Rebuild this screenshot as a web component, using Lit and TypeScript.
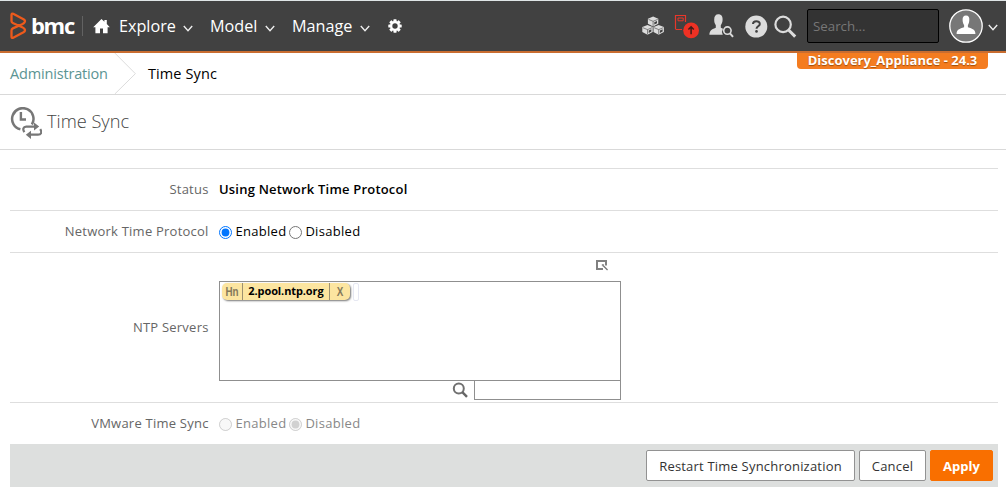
import { LitElement, html, css, svg } from "lit";
import { customElement } from "lit/decorators.js";

const chevron = html`<svg class="chev" width="10" height="7" viewBox="0 0 10 7"><path d="M.8 1 5 5.6 9.2 1" fill="none" stroke="#eee" stroke-width="1.4"/></svg>`;

const cube = (x: number, y: number) => svg`<g transform="translate(${x} ${y})">
  <path d="M5.2 0 10.4 2.1V7.2L5.2 9.8 0 7.2V2.1Z" fill="#dcdcdc"/>
  <path d="M.6 2.8 5.2 4.7 9.8 2.8M5.2 4.7V9.4" fill="none" stroke="#414141" stroke-width=".6"/>
  <path d="M6.4 5.6 9.1 4.4V6.6L6.4 8Z" fill="#414141"/></g>`;

@customElement("app-header")
export class AppHeader extends LitElement {
  static styles = css`
    :host { display: block; height: 53px; box-sizing: border-box; background: #414141; border-top: 1px solid #dfe5e6; border-bottom: 2px solid #c96d30; color: #fff; }
    .bar { display: flex; align-items: center; height: 50px; padding-left: 10px; }
    svg { display: block; flex: none; }
    .brand { display: flex; align-items: center; width: 72px; }
    .word { font: bold 22px/28px "Open Sans", sans-serif; letter-spacing: -1.3px; margin: 0 0 2px 3px; }
    .divider { width: 1px; height: 20px; background: #626262; margin-right: 10px; }
    .home { margin-right: 9px; }
    .menu { display: flex; align-items: center; height: 24px; font-size: 16.2px; line-height: 24px; white-space: nowrap; }
    .explore { width: 91px; }
    .model { width: 82px; }
    .manage { width: 96px; }
    .label { flex: 1; }
    .chev { margin-top: 4px; margin-right: 17px; }
    .manage .chev { margin-right: 18px; }
    .tools { display: flex; align-items: center; margin-left: auto; padding-right: 8px; }
    .search { box-sizing: border-box; width: 132px; height: 34px; margin: 0 10px; padding: 0 5px; border: 1px solid #000; border-radius: 2px; background: #333; color: #aaa; font: 13.3px "Open Sans", sans-serif; outline: none; }
    .search::placeholder { color: #777; opacity: 1; }
    .tools .chev { margin: 3px 0 0 5px; }
    .c1 { margin-right: 10px; } .c2 { margin-right: 10px; } .c3 { margin-right: 11px; } .c4 { margin-right: 6px; }
  `;
  render() {
    return html`<header class="bar">
      <div class="brand">
        <svg width="18" height="28" viewBox="0 0 18 28"><path d="M1.5 3Q1.5 1 3.2 1.8L13.5 7.2Q15.9 8.6 14.5 10.4 13.8 11.6 12.2 12.3L2.8 16.4Q1.5 17 1.5 18.4V24.4Q1.5 26.6 3.2 25.7L13.5 20.2Q15.9 18.8 14.5 17 13.8 15.9 12.2 15.2L2.8 11Q1.5 10.4 1.5 9Z" fill="none" stroke="#ed5a1c" stroke-width="2.3" stroke-linejoin="round"/></svg>
        <span class="word">bmc</span>
      </div>
      <span class="divider"></span>
      <svg class="home" width="17" height="15" viewBox="0 0 17 15"><path d="M8.5 0 11.4 2.8V1H13.8V5.1L16.8 8.2H14.6V14.2H10V9.6H7V14.2H2.4V8.2H.2Z" fill="#fff"/></svg>
      <div class="menu explore"><span class="label">Explore</span>${chevron}</div>
      <div class="menu model"><span class="label">Model</span>${chevron}</div>
      <div class="menu manage"><span class="label">Manage</span>${chevron}</div>
      <svg width="14" height="14" viewBox="-7 -7 14 14"><g fill="#fff">${[0, 45, 90, 135].map((a) => svg`<rect x="-1.6" y="-6.7" width="3.2" height="13.4" rx=".6" transform="rotate(${a})"/>`)}<circle r="5"/></g><circle r="2.7" fill="#414141"/></svg>
      <div class="tools">
        <svg class="c1" width="23" height="20" viewBox="0 0 23 20">${cube(6.9, 0.6)}${cube(1.3, 8.9)}${cube(12.5, 8.9)}</svg>
        <svg class="c2" width="25" height="25" viewBox="0 0 25 25"><path d="M1.5 15V1.5H11.5V8M1.5 15.5H8" fill="none" stroke="#e8372a" stroke-width="1.2"/><path d="M4 4H9.2V6.8H4Z" fill="none" stroke="#e8372a"/><circle cx="17.1" cy="16.4" r="7.9" fill="#ee3124"/><path d="M17.1 20.2V13.2M14.4 15.5 17.1 12.8 19.8 15.5" fill="none" stroke="#401b18" stroke-width="1.5"/></svg>
        <svg class="c3" width="25" height="24" viewBox="0 0 25 24"><path d="M9.3.3C12.3.3 13.8 2.4 13.6 5.8 13.5 8.7 12.6 10 11.8 11.3V13.7L14 14.8A5.8 5.8 0 0 0 13.8 20.8H.4C.5 17 2 15.5 6.8 13.7V11.3C5.8 9.8 5.2 8.4 5.2 5.8 5.2 2.2 6.7.3 9.3.3Z" fill="#dcdcdc"/><circle cx="18.4" cy="16.6" r="3.7" fill="none" stroke="#dcdcdc" stroke-width="1.6"/><path d="m21 19.4 3 3.4" stroke="#dcdcdc" stroke-width="2"/></svg>
        <svg class="c4" width="23" height="24" viewBox="0 0 23 24"><circle cx="11.3" cy="12.6" r="11" fill="#dcdcdc"/><path d="M8 10C8 6.2 14.8 6.2 14.8 9.9 14.8 12.3 11.5 12.3 11.5 14.8" fill="none" stroke="#414141" stroke-width="2"/><circle cx="11.5" cy="17.4" r="1.3" fill="#414141"/></svg>
        <svg width="23" height="24" viewBox="0 0 23 24"><circle cx="9.1" cy="10.4" r="7.7" fill="none" stroke="#dcdcdc" stroke-width="2.2"/><path d="m14.6 16 6.6 6.6" stroke="#dcdcdc" stroke-width="3"/></svg>
        <input class="search" placeholder="Search..." aria-label="Search" />
        <svg width="34" height="34" viewBox="0 0 34 34"><circle cx="17" cy="17" r="16.2" fill="#777" stroke="#fff" stroke-width="1.3"/><path d="M17 6.4C19.5 6.4 20.5 8 20.3 11 20.2 13.6 19.6 15 18.9 16.1V18.3C23.5 19.8 26.4 20.7 26.4 25H7.6C7.6 20.7 10.5 19.8 15.1 18.3V16.1C14.3 15 13.7 13.4 13.6 11 13.5 8 14.5 6.4 17 6.4Z" fill="#fff"/></svg>
        ${chevron}
      </div>
    </header>`;
  }
}

@customElement("app-root")
export class AppRoot extends LitElement {
  static styles = css`
    :host { display: block; position: relative; width: 1006px; height: 493px; overflow: hidden; background: #fff; color: #000; font: 13px/20px "Open Sans", sans-serif; }
    svg { display: block; flex: none; }
    .tag { position: absolute; top: 53px; right: 18px; width: 191px; height: 16px; border-radius: 0 0 4px 4px; background: #f47c20; color: #fff; font-weight: bold; font-size: 13px; line-height: 15px; text-align: center; text-shadow: 0 1px 1px #a04c08; white-space: nowrap; }
    .crumbs { display: flex; box-sizing: border-box; height: 42px; padding-left: 10px; border-bottom: 1px solid #d9d9d9; font-size: 14.5px; line-height: 41px; white-space: nowrap; }
    .link { width: 104px; color: #5b9493; letter-spacing: -.17px; }
    .here { margin-left: 12px; letter-spacing: .1px; }
    .title { display: flex; box-sizing: border-box; height: 55px; padding: 12px 0 0 9px; border-bottom: 1px solid #d9d9d9; }
    .title h1 { margin: 0 0 0 5px; font: 300 18.2px/28px "Open Sans", sans-serif; color: #444; }
    .form { margin: 18px 8px 0 10px; }
    .row { display: flex; align-items: center; box-sizing: border-box; height: 42px; border-top: 1px solid #dedede; }
    .servers { height: 150px; }
    .name { width: 198.6px; margin: -2px 10.4px 0 0; text-align: right; color: #666; white-space: nowrap; letter-spacing: .23px; }
    .status { font-weight: 600; margin-top: -2px; letter-spacing: .2px; }
    .radio { display: flex; align-items: center; white-space: nowrap; height: 20px; letter-spacing: .3px; }
    .radio span { margin-top: -2px; }
    .radio.first { width: 70px; }
    .radio input { width: 13px; height: 13px; margin: 2px 3.4px 0 0; flex: none; }
    .radio.off { color: #888; }
    .editor { width: 402px; align-self: stretch; }
    .pop { display: flex; justify-content: flex-end; height: 28px; padding-right: 13px; box-sizing: border-box; padding-top: 7px; }
    .box { display: flex; align-items: flex-start; box-sizing: border-box; height: 100px; border: 1px solid #8f8f8f; padding: 1px 2px; }
    .chip { display: flex; box-sizing: border-box; height: 17px; border-radius: 5px; background: #fce5a0; box-shadow: 1px 1px 2px #777; font: bold 11px/16px "Open Sans", sans-serif; width: 128px; text-align: center; }
    .code { display: block; transform: scaleX(.82); font: bold 12px/18px "Liberation Sans", sans-serif; color: #85795a; }
    .kind { width: 20px; border-right: 1px solid #9c9070; }
    .host { flex: 1; letter-spacing: -.1px; }
    .remove { width: 20px; border-left: 1px solid #9c9070; }
    .entry { box-sizing: border-box; width: 6px; height: 18px; margin-left: 3px; border: 1px solid #e6e8f2; border-radius: 2px; }
    .find { display: flex; justify-content: flex-end; }
    .find svg { margin: 1px 6px 0 0; }
    .query { box-sizing: border-box; width: 147px; height: 20px; margin-top: -1px; border: 1px solid #8f8f8f; padding: 0; outline: none; }
    .foot { display: flex; align-items: center; justify-content: flex-end; gap: 4px; box-sizing: border-box; height: 43px; padding-right: 5px; background: #dddfde; }
    button { box-sizing: border-box; height: 31px; padding: 0; border: 1px solid #929292; border-radius: 2px; background: #fff; color: #333; font: 13px "Open Sans", sans-serif; letter-spacing: .2px; white-space: nowrap; }
    .restart { width: 209px; }
    .cancel { width: 67px; }
    .apply { width: 63px; border-color: #f96f00; background: #f96f00; color: #fff; font-weight: bold; letter-spacing: 0; }
  `;
  render() {
    return html`
      <app-header></app-header>
      <div class="tag">Discovery_Appliance - 24.3</div>
      <nav class="crumbs">
        <span class="link">Administration</span>
        <svg width="22" height="41" viewBox="0 0 22 41"><path d="M.8 0 21.4 20.7.8 41" fill="none" stroke="#dcdcdc"/></svg>
        <span class="here">Time Sync</span>
      </nav>
      <div class="title">
        <svg width="33" height="33" viewBox="0 0 33 33" fill="none" stroke="#777"><path d="M22.9 17.5A10.7 10.7 0 1 0 11.4 22.3" stroke-width="2.5"/><path d="M11.9 5V12.5H17" stroke-width="2.4"/><path d="M15.4 25.2C13.4 22.4 14.2 19.6 17.2 19.6H26M31.2 22.2C33.4 25.4 32 27.6 29 27.6H20" stroke-width="2.2"/><path d="M25 15.4 30.2 19.6 25 23.6ZM22 23.7 16.8 27.7 22 31.9Z" fill="#777" stroke="none"/></svg>
        <h1>Time Sync</h1>
      </div>
      <main class="form">
        <div class="row"><span class="name">Status</span><span class="status">Using Network Time Protocol</span></div>
        <div class="row"><span class="name">Network Time Protocol</span>
          <label class="radio first"><input type="radio" name="ntp" checked /><span>Enabled</span></label>
          <label class="radio"><input type="radio" name="ntp" /><span>Disabled</span></label></div>
        <div class="row servers"><span class="name">NTP Servers</span>
          <div class="editor">
            <div class="pop"><svg width="12" height="11" viewBox="0 0 12 11"><path d="M10 5.5V1H1V9H7" fill="none" stroke="#808080" stroke-width="2"/><path d="m6 4.4 5.6 5.6" fill="none" stroke="#777" stroke-width="1.4"/><path d="M6 4H8.4L6 6.4Z" fill="#999"/></svg></div>
            <div class="box">
              <div class="chip"><span class="kind"><span class="code">Hn</span></span><span class="host">2.pool.ntp.org</span><span class="remove"><span class="code">X</span></span></div>
              <span class="entry"></span>
            </div>
            <div class="find">
              <svg width="16" height="16" viewBox="0 0 16 16"><circle cx="6.8" cy="6.6" r="5" fill="none" stroke="#707070" stroke-width="2"/><path d="m10.3 10.1 4.7 4.7" stroke="#666" stroke-width="2.4"/></svg>
              <input class="query" aria-label="Find server" />
            </div>
          </div>
        </div>
        <div class="row"><span class="name">VMware Time Sync</span>
          <label class="radio first off"><input type="radio" name="vm" disabled /><span>Enabled</span></label>
          <label class="radio off"><input type="radio" name="vm" checked disabled /><span>Disabled</span></label></div>
        <div class="foot">
          <button class="restart">Restart Time Synchronization</button>
          <button class="cancel">Cancel</button>
          <button class="apply">Apply</button>
        </div>
      </main>`;
  }
}
